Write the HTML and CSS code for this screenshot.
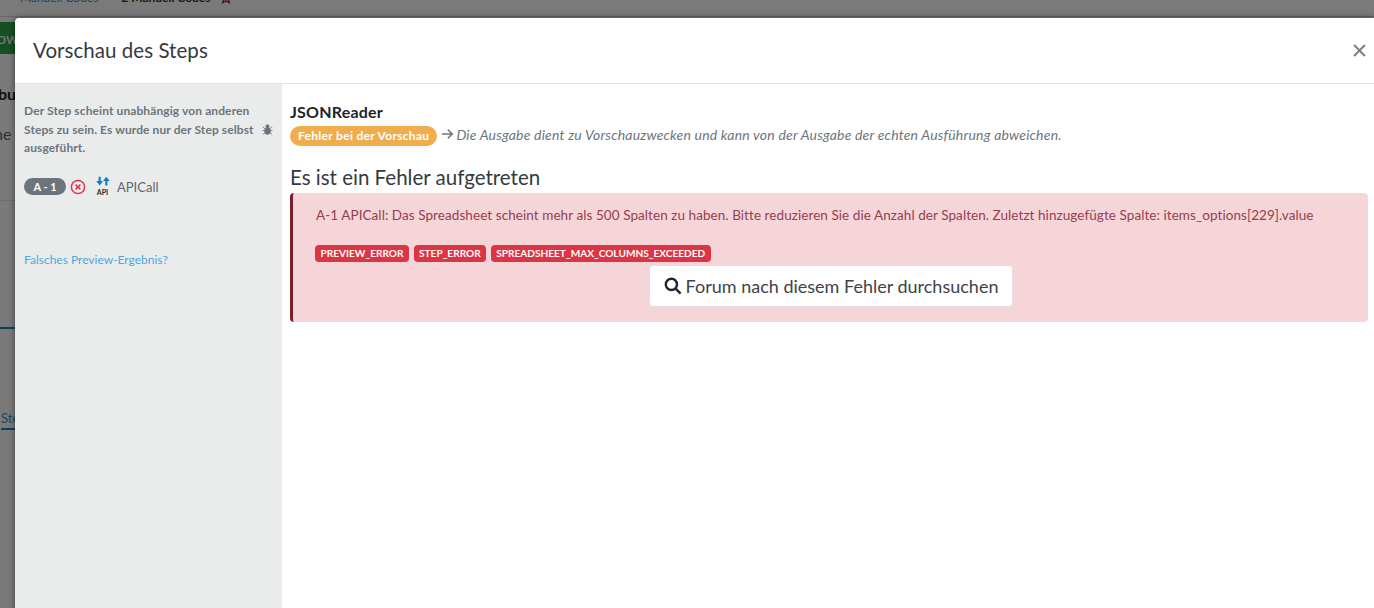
FILE: index.html
```html
<!DOCTYPE html>
<html lang="de">
<head>
<meta charset="utf-8">
<title>Vorschau des Steps</title>
<link rel="stylesheet" href="styles.css">
</head>
<body>
<div class="behind">
  <div class="crumbs"><span class="crumb-link">Manuell Codes</span><span class="crumb-cur">2 Manuell Codes</span><svg class="star" viewBox="0 0 12 12"><path d="M6 1l1.5 3.4 3.7.3-2.8 2.4.9 3.6L6 8.8l-3.3 1.9.9-3.6L.8 4.7l3.7-.3z"/></svg></div>
  <div class="band"></div>
  <div class="green">ow</div>
  <div class="bu">bu</div>
  <div class="ne">ne</div>
  <div class="rule"></div>
  <div class="tabline"></div>
  <div class="ste">Ste</div>
</div>
<div class="backdrop"></div>
<section class="modal">
  <header class="modal-head">
    <h1 class="modal-title">Vorschau des Steps</h1>
    <svg class="close" viewBox="0 0 12 12" aria-label="Schließen"><path d="M1 1l10 10M11 1L1 11"/></svg>
  </header>
  <div class="modal-body">
    <aside class="side">
      <p class="side-note">Der Step scheint unabhängig von anderen Steps zu sein. Es wurde nur der Step selbst <svg class="bug" viewBox="0 0 12 12"><circle cx="6" cy="2.6" r="1.8"/><rect x="3" y="4.2" width="6" height="7" rx="2.6"/><path d="M0.8 3l2.4 2.2M11.2 3L8.8 5.2M0.5 7.2h3M11.5 7.2h-3M1 11.4l2.4-2M11 11.4l-2.4-2"/></svg> ausgeführt.</p>
      <div class="step-row">
        <span class="step-pill">A - 1</span>
        <svg class="x-circle" viewBox="0 0 16 16"><circle cx="8" cy="8" r="6.6"/><path d="M5.6 5.6l4.8 4.8M10.4 5.6l-4.8 4.8"/></svg>
        <span class="api-icon">
          <svg viewBox="0 0 16 10"><path d="M3 0h2.4v5H8L4.2 10 .4 5H3z"/><path d="M10.6 10h2.4V5h2.6L11.8 0 8 5h2.6z"/></svg>
          <b>API</b>
        </span>
        <span class="step-name">APICall</span>
      </div>
      <a class="wrong" href="#">Falsches Preview-Ergebnis?</a>
    </aside>
    <main class="main">
      <h2 class="reader">JSONReader</h2>
      <div class="status">
        <span class="status-pill">Fehler bei der Vorschau</span>
        <svg class="arrow" viewBox="0 0 14 12"><path d="M1 6h11M7.4 1.4L12 6l-4.6 4.6"/></svg>
        <em class="status-note">Die Ausgabe dient zu Vorschauzwecken und kann von der Ausgabe der echten Ausführung abweichen.</em>
      </div>
      <h3 class="err-title">Es ist ein Fehler aufgetreten</h3>
      <div class="alert">
        <p class="alert-text">A-1 APICall: Das Spreadsheet scheint mehr als 500 Spalten zu haben. Bitte reduzieren Sie die Anzahl der Spalten. Zuletzt hinzugefügte Spalte: items_options[229].value</p>
        <div class="tags"><span class="tag">PREVIEW_ERROR</span><span class="tag">STEP_ERROR</span><span class="tag">SPREADSHEET_MAX_COLUMNS_EXCEEDED</span></div>
        <div class="btn-row"><a class="btn" href="#"><svg class="search" viewBox="0 0 18 18"><circle cx="7.4" cy="7.4" r="5.6"/><path d="M11.6 11.6l5 5"/></svg>Forum nach diesem Fehler durchsuchen</a></div>
      </div>
    </main>
  </div>
</section>
</body>
</html>
```
FILE: styles.css
```css
* { box-sizing: border-box; }
html, body { margin: 0; height: 100%; }
body { position: relative; width: 1374px; height: 608px; overflow: hidden; background: #fff; font-family: "Lato", "Noto Sans", sans-serif; color: #343a40; }
.behind { position: absolute; inset: 0; font-size: 14px; color: #333; }
.crumbs { position: absolute; top: -10px; left: 20px; display: flex; align-items: center; gap: 23px; font-size: 12px; line-height: 16px; font-weight: 700; }
.crumb-link { color: #2d8fc9; font-weight: 400; }
.star { width: 12px; height: 12px; margin-left: -14px; fill: none; stroke: #a33; stroke-width: 1.4; }
.band { position: absolute; left: 0; right: 0; top: 0; height: 17px; border-bottom: 1px solid #d8d8d8; }
.green { position: absolute; left: 0; top: 22px; width: 20px; height: 32px; background: #2ca84a; color: #fff; font-size: 16px; line-height: 32px; text-indent: -3px; overflow: hidden; }
.bu { position: absolute; left: -2px; top: 84px; font-weight: 700; font-size: 16px; color: #222; }
.ne { position: absolute; left: -6px; top: 124px; color: #666; font-size: 16px; }
.rule { position: absolute; left: 0; right: 0; top: 200px; height: 1px; background: #e4e4e4; }
.tabline { position: absolute; left: 0; width: 15px; top: 327px; height: 2px; background: #1a86c8; }
.ste { position: absolute; left: 1px; top: 409px; width: 14px; height: 21px; overflow: hidden; font-size: 13px; line-height: 18px; color: #2f9be0; }
.ste::after { content: ""; position: absolute; left: -1px; top: 19px; width: 15px; height: 2px; background: #1a86c8; }
.backdrop { position: absolute; inset: 0; background: rgba(0,0,0,.52); }
.modal { position: absolute; left: 15px; top: 18px; width: 1359px; height: 600px; background: #fff; box-shadow: 0 0 6px rgba(0,0,0,.5); border-radius: 4px 0 0 0; display: flex; flex-direction: column; }
.modal-head { height: 66px; flex: none; display: flex; align-items: center; justify-content: space-between; padding: 0 8px 0 18px; border-bottom: 1px solid #dee2e6; }
.modal-title { margin: 0 0 2px; font-size: 20.5px; font-weight: 400; letter-spacing: .05px; color: #343a40; }
.close { width: 13px; height: 13px; fill: none; stroke: #808080; stroke-width: 1.9; }
.modal-body { flex: 1; display: flex; min-height: 0; }
.side { width: 267px; flex: none; background: #eaecec; padding: 18px 8px 0 9px; font-size: 12px; color: #6c757d; display: flex; flex-direction: column; }
.side-note { margin: 0; font-weight: 700; line-height: 18.5px; letter-spacing: .1px; }
.bug { width: 11px; height: 11px; margin: 0 0 -1px 5px; fill: #6c757d; stroke: #6c757d; stroke-width: .9; }
.step-row { display: flex; align-items: center; margin-top: 18px; height: 22px; }
.step-pill { width: 42px; height: 17px; border-radius: 9px; background: #6c757d; color: #fff; font-weight: 700; font-size: 11px; line-height: 17px; text-align: center; }
.x-circle { width: 16px; height: 16px; margin-left: 4px; fill: none; stroke: #e3344a; stroke-width: 1.5; }
.api-icon { width: 15px; margin-left: 9px; display: flex; flex-direction: column; align-items: center; }
.api-icon svg { width: 14px; height: 10px; fill: #0b7fc4; }
.api-icon b { font-size: 7px; line-height: 9px; color: #212529; margin-top: 2px; }
.step-name { margin-left: 7px; font-size: 13px; color: #5d666e; }
.wrong { margin-top: 54px; color: #4aa8dc; font-size: 12px; text-decoration: none; }
.main { flex: 1; padding: 18px 6px 0 8px; min-width: 0; }
.reader { margin: 0; font-size: 16px; line-height: 20px; font-weight: 700; letter-spacing: .2px; color: #212529; }
.status { display: flex; align-items: center; height: 20px; margin-top: 4px; font-size: 14px; letter-spacing: .2px; color: #6c757d; }
.status-pill { height: 20px; padding: 0 8px; border-radius: 10px; background: #f0ad4e; color: #fff; font-weight: 700; font-size: 12px; letter-spacing: .3px; line-height: 19px; }
.arrow { width: 13px; height: 12px; margin: 0 3px 4px 4px; fill: none; stroke: #6c757d; stroke-width: 1.8; }
.status-note { margin-bottom: 4px; margin-left: -1px; }
.err-title { margin: 19px 0 0; font-size: 20.5px; line-height: 24px; font-weight: 400; color: #343a40; }
.alert { margin-top: 4px; height: 129px; background: #f6d5d8; border-left: 3px solid #7b1e26; border-radius: 4px; padding: 13px 22px 0 23px; color: #94404f; font-size: 13.5px; letter-spacing: .07px; }
.alert-text { margin: 0; line-height: 18px; }
.tags { display: flex; gap: 4.5px; margin: 21px 0 0 -1px; letter-spacing: 0; }
.tag { height: 17px; padding: 0 5.5px; border-radius: 4px; background: #dc3545; color: #fff; font-weight: 700; font-size: 10.1px; line-height: 17px; }
.btn-row { display: flex; justify-content: center; margin-top: 3px; letter-spacing: 0; }
.btn { display: flex; align-items: center; height: 42px; padding: 0 14px; background: #fff; border: 1px solid #e8dcde; border-radius: 4px; color: #3f4347; font-size: 18px; text-decoration: none; }
.search { width: 18px; height: 18px; margin-right: 4px; fill: none; stroke: #212529; stroke-width: 2.4; }
```
